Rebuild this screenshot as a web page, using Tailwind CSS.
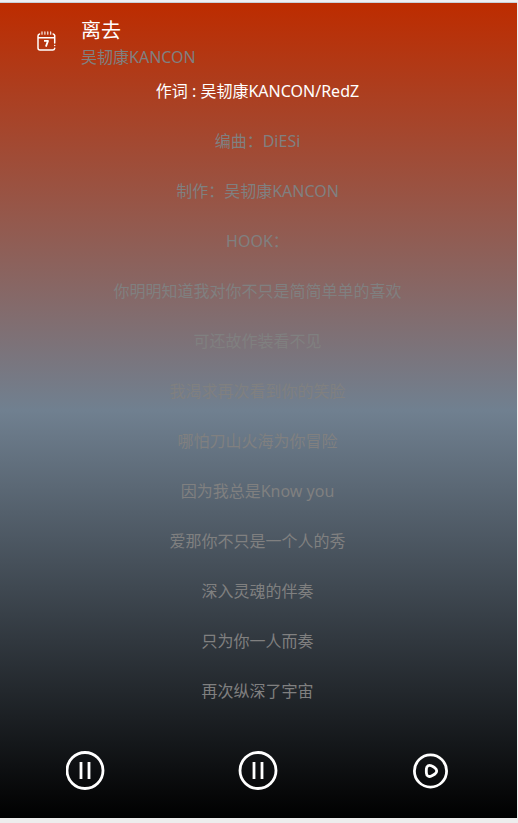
<!DOCTYPE html>
<html lang="zh-CN">
<head>
<meta charset="utf-8">
<meta name="viewport" content="width=device-width, initial-scale=1">
<title>离去</title>
<script src="https://cdn.jsdelivr.net/npm/@tailwindcss/browser@4"></script>
</head>
<body class="min-h-screen flex flex-col bg-[#ededed] border-t-2 border-[#eef0f3] pb-[5px] pr-px font-['Noto_Sans','Noto_Sans_CJK_SC',sans-serif]">
<main class="flex-1 flex flex-col border-t border-[#c9d0d8] bg-linear-to-b/srgb from-[#bd2c00] via-[#708090] to-black">
  <header class="flex items-start pt-[14px] pl-9">
    <svg class="size-5 mt-[14px] mr-[25px] shrink-0" viewBox="0 0 20 20" fill="none" stroke="#fff" stroke-width="1.5" stroke-linecap="round" aria-hidden="true">
      <path d="M18.700 12V4.500a2 2 0 0 0-1.600-1.600M3.600 2.900a2 2 0 0 0-1.600 2v12a2 2 0 0 0 2 2h12.700a2 2 0 0 0 2-1.600M18.700 14.400v.2M2 6.700h16.700"/>
      <path d="M6 .900v2.400M8.900 .900v2.400M11.800 .900v2.400M14.700 .900v2.400" stroke-width="1.100"/>
      <path d="M8 9.900h4L9.900 15.600" stroke-width="1.800" stroke-linecap="butt" stroke-linejoin="round"/>
    </svg>
    <div>
      <h1 class="text-xl leading-7 text-white">离去</h1>
      <p class="text-base leading-6 text-[#808080]">吴韧康KANCON</p>
    </div>
  </header>
  <ul class="-mt-[3px] pr-0.5 text-center text-base leading-[50px] text-[#808080]">
    <li class="text-white">作词 : 吴韧康KANCON/RedZ</li>
    <li>编曲：DiESi</li>
    <li>制作：吴韧康KANCON</li>
    <li>HOOK：</li>
    <li>你明明知道我对你不只是简简单单的喜欢</li>
    <li>可还故作装看不见</li>
    <li>我渴求再次看到你的笑脸</li>
    <li>哪怕刀山火海为你冒险</li>
    <li>因为我总是Know you</li>
    <li>爱那你不只是一个人的秀</li>
    <li>深入灵魂的伴奏</li>
    <li>只为你一人而奏</li>
    <li>再次纵深了宇宙</li>
  </ul>
  <footer class="flex-1 grid grid-cols-3 place-items-center pt-2">
    <button type="button" aria-label="上一首" class="cursor-pointer">
      <svg class="size-10" viewBox="0 0 40 40" fill="none" stroke="#fff" stroke-width="2.8"><circle cx="19" cy="19.500" r="18"/><path d="M15 11v17M23 11v17"/></svg>
    </button>
    <button type="button" aria-label="暂停" class="cursor-pointer">
      <svg class="size-10" viewBox="0 0 40 40" fill="none" stroke="#fff" stroke-width="2.8"><circle cx="20" cy="19.500" r="18"/><path d="M16 11v17M24 11v17"/></svg>
    </button>
    <button type="button" aria-label="播放" class="cursor-pointer">
      <svg class="size-10" viewBox="0 0 40 40" fill="none" stroke="#fff" stroke-width="2.8" stroke-linejoin="round"><circle cx="19.500" cy="20" r="16.100"/><path d="M15.400 17.700c.2-3 2.600-4.100 5-2.900 1.300.6 2.400 1.200 3.500 2 2.400 1.700 2.400 4.500 0 6.200-1.100.8-2.200 1.400-3.500 2-2.400 1.200-4.800.1-5-2.900a30 30 0 0 1 0-4.400z"/></svg>
    </button>
  </footer>
</main>
</body>
</html>
